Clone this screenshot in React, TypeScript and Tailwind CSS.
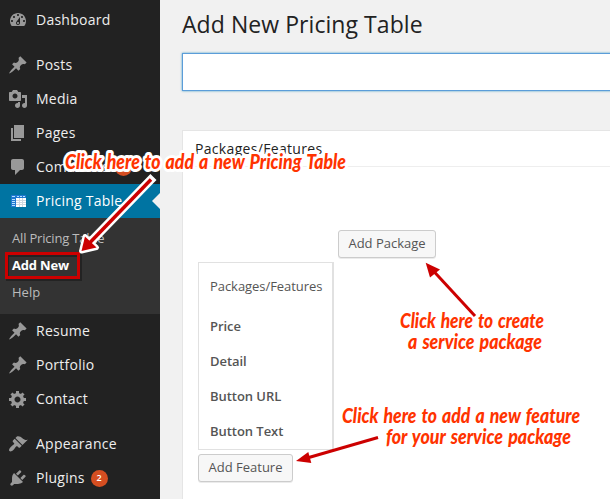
import type { ReactNode } from 'react';

const PIN =
  'M10.44 3.02l1.82-1.82 6.36 6.35-1.83 1.82c-1.05-.68-2.48-.57-3.41.36l-.75.75c-.92.93-1.04 2.35-.35 3.41l-1.83 1.82-2.41-2.41-2.8 2.79c-.42.42-3.38 2.71-3.8 2.29s1.86-3.39 2.28-3.81l2.79-2.79L4.1 9.36l1.83-1.82c1.05.69 2.48.57 3.4-.36l.75-.75c.93-.92 1.05-2.35.36-3.41z';
const DASHBOARD =
  'M3.76 16h12.48c1.1-1.37 1.76-3.11 1.76-5 0-4.42-3.58-8-8-8s-8 3.58-8 8c0 1.89.66 3.63 1.76 5zM10 4c.55 0 1 .45 1 1s-.45 1-1 1-1-.45-1-1 .45-1 1-1zM6 6c.55 0 1 .45 1 1s-.45 1-1 1-1-.45-1-1 .45-1 1-1zm8 0c.55 0 1 .45 1 1s-.45 1-1 1-1-.45-1-1 .45-1 1-1zm-5.37 5.55L12 7v6c0 1.1-.9 2-2 2s-2-.9-2-2c0-.57.24-1.08.63-1.45zM4 10c.55 0 1 .45 1 1s-.45 1-1 1-1-.45-1-1 .45-1 1-1zm12 0c.55 0 1 .45 1 1s-.45 1-1 1-1-.45-1-1 .45-1 1-1zm-5 3c0-.55-.45-1-1-1s-1 .45-1 1 .45 1 1 1 1-.45 1-1z';
const MEDIA =
  'M13 11V4c0-.55-.45-1-1-1h-1.67L9 1H5L3.67 3H2c-.55 0-1 .45-1 1v7c0 .55.45 1 1 1h10c.55 0 1-.45 1-1zM7 4.5c1.38 0 2.5 1.12 2.5 2.5S8.38 9.5 7 9.5 4.5 8.38 4.5 7 5.62 4.5 7 4.5zM14 6h5v10.5c0 1.38-1.12 2.5-2.5 2.5S14 17.88 14 16.5s1.12-2.5 2.5-2.5c.17 0 .34.02.5.05V9h-3V6zm-4 8.05V13h2v3.5c0 1.38-1.12 2.5-2.5 2.5S7 17.88 7 16.5 8.12 14 9.5 14c.17 0 .34.02.5.05z';
const PAGES = 'M6 15V2h10v13H6zm-1 1h8v2H3V5h2v11z';
const COMMENTS =
  'M5 2h9c1.1 0 2 .9 2 2v7c0 1.1-.9 2-2 2h-2l-5 5v-5H5c-1.1 0-2-.9-2-2V4c0-1.1.9-2 2-2z';
const GEAR =
  'M18 12h-2.18c-.17.7-.44 1.35-.81 1.93l1.54 1.54-2.1 2.1-1.54-1.54c-.58.36-1.23.63-1.91.79V19H8v-2.18c-.68-.16-1.33-.43-1.91-.79l-1.54 1.54-2.12-2.12 1.54-1.54c-.36-.58-.63-1.23-.79-1.91H1V9.03h2.17c.16-.7.44-1.35.8-1.94L2.43 5.55l2.1-2.1 1.54 1.54c.58-.37 1.24-.64 1.93-.81V2h3v2.18c.68.16 1.33.43 1.91.79l1.54-1.54 2.12 2.12-1.54 1.54c.36.59.64 1.24.8 1.94H18V12zm-8.5 1.5c1.66 0 3-1.34 3-3s-1.34-3-3-3-3 1.34-3 3 1.34 3 3 3z';
const BRUSH =
  'M14.48 11.06L7.41 3.99l1.5-1.5c.5-.56 2.3-.47 3.51.32 1.21.8 1.43 1.28 2.91 2.1 1.18.64 2.45 1.26 4.45.85zm-.71.71L6.7 4.7 4.93 6.47c-.39.39-.39 1.02 0 1.41l1.06 1.06c.39.39.39 1.03 0 1.42-.6.6-1.43 1.11-2.21 1.69-.35.26-.7.53-1.01.84C1.43 14.23.4 16.08 1.4 17.07c.99 1 2.84-.03 4.18-1.36.31-.31.58-.66.85-1.02.57-.78 1.08-1.61 1.69-2.21.39-.39 1.02-.39 1.41 0l1.06 1.06c.39.39 1.02.39 1.41 0z';
const PLUG =
  'M13.11 4.36L9.87 7.6 8 5.73l3.24-3.24c.35-.34 1.05-.2 1.56.32.52.51.66 1.21.31 1.55zm-8 1.77l.91-1.12 9.01 9.01-1.19.84c-.71.71-2.63 1.16-3.82 1.16H6.14L4.9 17.26c-.59.59-1.54.59-2.12 0-.59-.58-.59-1.53 0-2.12l1.24-1.24v-3.88c0-1.13.4-3.19 1.09-3.89zm7.26 3.97l3.24-3.24c.34-.35 1.04-.21 1.55.31.52.51.66 1.21.31 1.55l-3.24 3.25z';

function Icon({ d }: { d: string }) {
  return (
    <svg viewBox="0 0 20 20" className="size-5 shrink-0 fill-[#999999]">
      <path fillRule="evenodd" d={d} />
    </svg>
  );
}

function TableIcon() {
  return (
    <svg viewBox="0 0 20 20" className="size-5 shrink-0" shapeRendering="crispEdges">
      <rect x="3" y="4" width="15" height="12" fill="#ffffff" />
      <rect x="3" y="4" width="15" height="3" fill="#1f78d1" />
      <rect x="3" y="4" width="5" height="12" fill="#1f78d1" />
      <path d="M4 5h3v1H4zM9 5h2v1H9zM12 5h2v1h-2zM15 5h2v1h-2zM4 8h3v1H4zM4 10h3v1H4zM4 12h3v1H4zM4 14h3v1H4z" fill="#b5e2ff" />
      <path d="M8 9h10v1H8zM8 11h10v1H8zM8 13h10v1H8zM11 7h1v9h-1zM14 7h1v9h-1z" fill="#cfd8e0" />
    </svg>
  );
}

function MenuItem({ icon, label, badge }: { icon: string; label: string; badge?: string }) {
  return (
    <a className="flex h-[34px] shrink-0 items-center gap-2 pl-2 text-[#eeeeee]">
      <Icon d={icon} />
      <span>{label}</span>
      {badge && (
        <span className="-ml-0.5 flex size-[17px] items-center justify-center rounded-full bg-[#d54e21] text-[9px] font-semibold text-white">
          {badge}
        </span>
      )}
    </a>
  );
}

function Sidebar() {
  return (
    <nav className="flex w-40 shrink-0 flex-col bg-[#222222] pt-[3px] text-[14px] leading-[18px] tracking-[0.25px]">
      <MenuItem icon={DASHBOARD} label="Dashboard" />
      <div className="h-[11px] shrink-0" />
      <MenuItem icon={PIN} label="Posts" />
      <MenuItem icon={MEDIA} label="Media" />
      <MenuItem icon={PAGES} label="Pages" />
      <MenuItem icon={COMMENTS} label="Comments" badge="1" />
      <a className="flex h-[34px] shrink-0 items-center gap-2 bg-[#0074a2] pl-2 text-white">
        <TableIcon />
        <span>Pricing Table</span>
        <svg viewBox="0 0 8 16" className="ml-auto h-4 w-2 fill-[#f1f1f1]">
          <path d="M8 0v16L0 8z" />
        </svg>
      </a>
      <div className="flex h-24 shrink-0 flex-col bg-[#333333] py-[7px] pl-3 text-[13px] leading-[27px] tracking-[-0.18px] text-[#bbbbbb]">
        <a>All Pricing Table</a>
        <a className="font-bold text-white">Add New</a>
        <a className="tracking-normal">Help</a>
      </div>
      <MenuItem icon={PIN} label="Resume" />
      <MenuItem icon={PIN} label="Portfolio" />
      <MenuItem icon={GEAR} label="Contact" />
      <div className="h-[11px] shrink-0" />
      <MenuItem icon={BRUSH} label="Appearance" />
      <MenuItem icon={PLUG} label="Plugins" badge="2" />
    </nav>
  );
}

function WpButton({ children, className }: { children: ReactNode; className: string }) {
  return (
    <button
      className={`flex h-7 items-center justify-center rounded-[3px] border border-[#cccccc] bg-[#f7f7f7] text-[13px] text-[#555555] shadow-[0_1px_0_rgba(0,0,0,0.08)] ${className}`}
    >
      {children}
    </button>
  );
}

function FeatureRow({ label }: { label: string }) {
  return (
    <div className="flex h-[35px] shrink-0 items-center text-[13px] font-semibold tracking-[-0.05px] text-[#555555]">
      {label}
    </div>
  );
}

function Editor() {
  return (
    <main className="flex min-w-0 flex-1 flex-col bg-[#f1f1f1] pl-[22px]">
      <h1 className="pt-[9px] text-[23px] leading-[30px] tracking-[0.06px] whitespace-nowrap text-[#222222]">
        Add New Pricing Table
      </h1>
      <input
        className="mt-[14px] -mr-1 h-[38px] shrink-0 border border-[#5b9dd9] bg-white shadow-[0_0_2px_rgba(30,140,190,0.8)] outline-none"
      />
      <section className="mt-[39px] flex flex-1 flex-col border-t border-l border-[#e5e5e5] bg-white">
        <h2 className="h-[36px] shrink-0 border-b border-[#eeeeee] pl-3 text-[14px] leading-[35px] tracking-[0.32px] text-[#222222]">
          Packages/Features
        </h2>
        <div className="flex flex-col items-start pl-[15px]">
          <WpButton className="mt-[63px] ml-[140px] w-[98px]">Add Package</WpButton>
          <div className="mt-1 flex h-[188px] w-[136px] flex-col border border-r-2 border-[#e1e1e1] pl-[11px]">
            <div className="flex h-[46px] shrink-0 items-center pt-[1px] text-[13px] tracking-[-0.05px] text-[#555555]">
              Packages/Features
            </div>
            <FeatureRow label="Price" />
            <FeatureRow label="Detail" />
            <FeatureRow label="Button URL" />
            <FeatureRow label="Button Text" />
          </div>
          <WpButton className="mt-1 w-[95px]">Add Feature</WpButton>
        </div>
      </section>
    </main>
  );
}

function Note({ x, y, width, children, outlined }: { x: number; y: number; width: number; children: string; outlined?: boolean }) {
  return (
    <text
      x={x}
      y={y}
      textLength={width}
      lengthAdjust="spacingAndGlyphs"
      className="fill-[#ff3300] font-['Lato',sans-serif] text-[20px] font-black italic [word-spacing:1.5px]"
      stroke={outlined ? '#ffffff' : 'none'}
      strokeWidth={outlined ? 6 : 0}
      strokeLinejoin="round"
      paintOrder="stroke"
    >
      {children}
    </text>
  );
}

function Annotations() {
  return (
    <svg viewBox="0 0 610 499" className="pointer-events-none absolute inset-0 h-[499px] w-[610px]">
      <rect x="7.5" y="255.5" width="73" height="24" fill="none" stroke="#000000" strokeOpacity="0.3" strokeWidth="3" />
      <rect x="6.5" y="253.5" width="72" height="24" fill="none" stroke="#cc0000" strokeWidth="3" />
      <g stroke="#ffffff" strokeLinejoin="round" fill="#ffffff">
        <path d="M150.500 180L92 240.500" strokeWidth="8.500" strokeLinecap="square" />
        <path d="M81.500 251l3.500-14.500 11.500 11z" strokeWidth="5" />
      </g>
      <path d="M151 179.500L90 242.500" stroke="#cc0000" strokeWidth="3.500" />
      <path d="M81.500 251l3.500-14.500 11.500 11z" fill="#cc0000" />
      <path d="M475 316L433 270.500" stroke="#cc0000" strokeWidth="3" />
      <path d="M425.700 262.700l14.300 6.800-10 8z" fill="#cc0000" />
      <path d="M378 437.500L308 457.800" stroke="#cc0000" strokeWidth="3" />
      <path d="M296 461l12.300-9 3 10.900z" fill="#cc0000" />
      <Note x={65} y={169} width={281} outlined>Click here to add a new Pricing Table</Note>
      <Note x={400} y={328} width={144}>Click here to create</Note>
      <Note x={408} y={349} width={134}>a service package</Note>
      <Note x={342} y={423} width={238}>Click here to add a new feature</Note>
      <Note x={386} y={444} width={185}>for your service package</Note>
    </svg>
  );
}

export default function App() {
  return (
    <div className="relative flex h-[499px] w-[610px] overflow-hidden font-['Open_Sans',sans-serif]">
      <Sidebar />
      <Editor />
      <Annotations />
    </div>
  );
}
